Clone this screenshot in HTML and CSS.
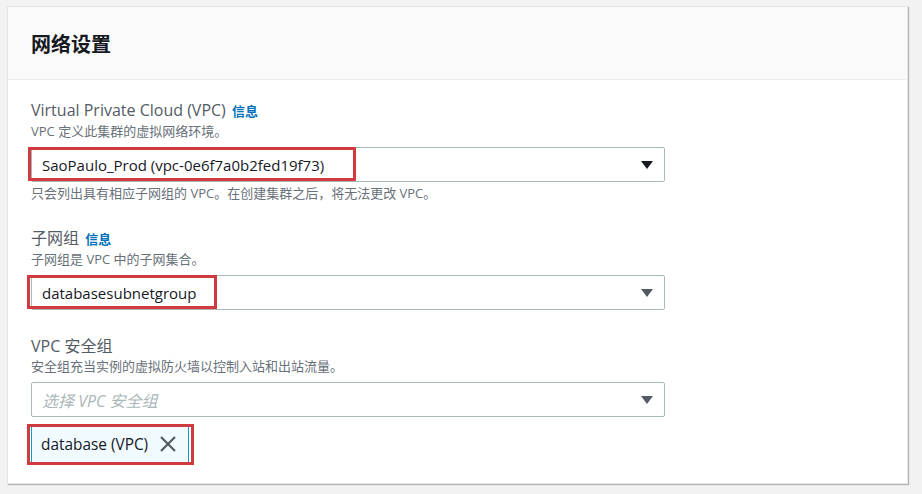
FILE: index.html
```html
<!DOCTYPE html>
<html lang="zh-CN">
<head>
    <meta charset="UTF-8">
    <meta name="viewport" content="width=device-width, initial-scale=1.0">
    <title>网络设置</title>
    <link rel="stylesheet" href="styles.css">
</head>
<body>
    <div class="panel">
        <div class="panel-header">
            <h2>网络设置</h2>
        </div>
        <div class="panel-body">
            <div class="field">
                <div class="field-label">Virtual Private Cloud (VPC) <a class="info-link" href="#">信息</a></div>
                <div class="field-desc">VPC 定义此集群的虚拟网络环境。</div>
                <div class="select">
                    <span class="select-value">SaoPaulo_Prod (vpc-0e6f7a0b2fed19f73)</span>
                    <span class="caret caret-dark"></span>
                    <span class="mark mark-vpc"></span>
                </div>
                <div class="field-hint">只会列出具有相应子网组的 VPC。在创建集群之后，将无法更改 VPC。</div>
            </div>

            <div class="field">
                <div class="field-label">子网组 <a class="info-link" href="#">信息</a></div>
                <div class="field-desc">子网组是 VPC 中的子网集合。</div>
                <div class="select">
                    <span class="select-value">databasesubnetgroup</span>
                    <span class="caret"></span>
                    <span class="mark mark-subnet"></span>
                </div>
            </div>

            <div class="field">
                <div class="field-label">VPC 安全组</div>
                <div class="field-desc">安全组充当实例的虚拟防火墙以控制入站和出站流量。</div>
                <div class="select">
                    <span class="select-placeholder">选择 VPC 安全组</span>
                    <span class="caret"></span>
                </div>
                <div class="tokens">
                    <div class="token">
                        <span>database (VPC)</span>
                        <svg class="token-close" width="18" height="18" viewBox="0 0 18 18">
                            <path d="M2 2 L16 16 M16 2 L2 16" stroke="#545b64" stroke-width="2.2" fill="none"/>
                        </svg>
                        <span class="mark mark-token"></span>
                    </div>
                </div>
            </div>
        </div>
    </div>
</body>
</html>
```

FILE: styles.css
```css
* {
    box-sizing: border-box;
    margin: 0;
    padding: 0;
}

body {
    font-family: 'Open Sans', 'Noto Sans CJK SC', sans-serif;
    background-color: #f2f2f2;
    color: #16191f;
    padding: 6px 14px 10px 7px;
}

.panel {
    width: 901px;
    height: 478px;
    background-color: #fff;
    border: 1px solid #e3e6e6;
    box-shadow: 1px 1px 1px rgba(0, 0, 0, 0.25);
}

.panel-header {
    height: 73px;
    background-color: #fafafa;
    border-bottom: 1px solid #eaeded;
    padding: 0 23px;
    display: flex;
    align-items: center;
}

.panel-header h2 {
    font-size: 20px;
    font-weight: 700;
    color: #16191f;
}

.panel-body {
    padding: 19px 23px 0;
}

.field {
    margin-bottom: 25px;
}

.field-label {
    font-size: 16px;
    line-height: 22px;
    color: #545b64;
}

.info-link {
    font-size: 13px;
    font-weight: 700;
    color: #0073bb;
    text-decoration: none;
    margin-left: 2px;
}

.field-desc,
.field-hint {
    font-size: 13px;
    line-height: 18px;
    color: #687078;
}

.field-hint {
    margin-top: 2px;
}

.select {
    position: relative;
    width: 634px;
    height: 35px;
    margin-top: 7px;
    border: 1px solid #aab7b8;
    border-radius: 2px;
    padding: 0 10px;
    display: flex;
    align-items: center;
    justify-content: space-between;
    font-size: 15px;
}

.select-placeholder {
    color: #aab7b8;
    font-style: italic;
    font-size: 16px;
}

.caret {
    width: 0;
    height: 0;
    margin-right: 1px;
    border-left: 6px solid transparent;
    border-right: 6px solid transparent;
    border-top: 8px solid #545b64;
}

.caret-dark {
    border-top-color: #16191f;
}

.tokens {
    margin-top: 9px;
}

.token {
    position: relative;
    display: inline-flex;
    align-items: center;
    height: 36px;
    padding: 0 11px 0 9px;
    background-color: #f1faff;
    border-left: 1px solid #00a1c9;
    border-right: 1px solid #00a1c9;
    font-size: 15.4px;
    gap: 11px;
}

/* red highlight frames drawn over the chosen values */
.mark {
    position: absolute;
    border: 3px solid #d13a3f;
    pointer-events: none;
}

.mark-vpc {
    left: -4px;
    top: -1px;
    width: 328px;
    height: 34px;
}

.mark-subnet {
    left: -5px;
    top: -1px;
    width: 190px;
    height: 34px;
}

.mark-token {
    left: -5px;
    top: -2px;
    width: 167px;
    height: 41px;
}
```
